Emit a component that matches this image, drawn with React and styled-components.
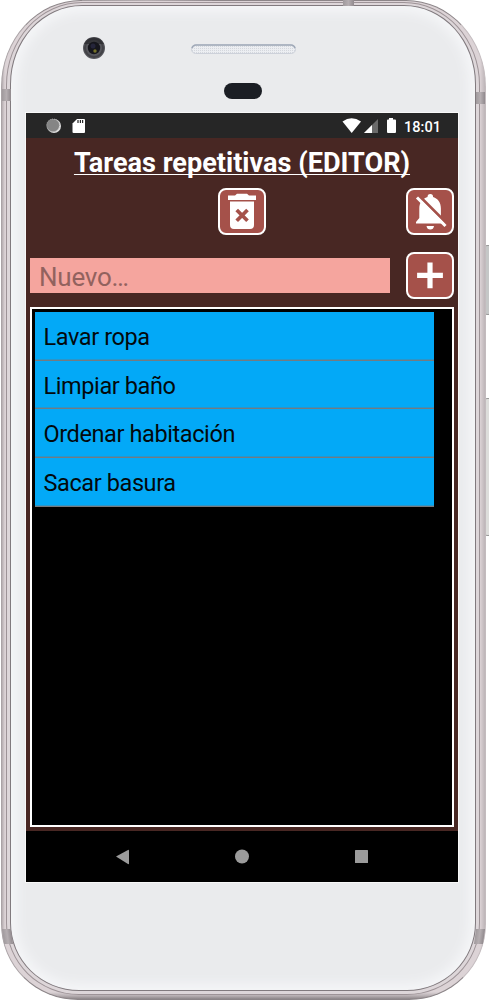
import React from 'react';
import styled, { createGlobalStyle } from 'styled-components';

const Global = createGlobalStyle`
  * { box-sizing: border-box; }
  body { margin: 0; background: #fff; overflow: hidden; font-family: Roboto, sans-serif; }
`;

const Stage = styled.div`
  position: relative;
  width: 489px;
  height: 1000px;
  overflow: hidden;
`;

const SideKey = styled.div`
  position: absolute;
  left: 484px;
  top: ${(p) => p.$top}px;
  width: 9px;
  height: ${(p) => p.$height}px;
  border: 1px solid #9b9b9b;
  border-radius: 3px;
  background: ${(p) => p.$fill};
`;

const Body = styled.div`
  position: relative;
  width: 485px;
  height: 1000px;
  margin-left: 1px;
  padding: 1px 5px 4px 4px;
  border: 1px solid #8c8588;
  border-left-color: #aaa3a6;
  border-right-color: #c3bbbe;
  border-radius: 80px 80px 77px 77px / 87px 87px 76px 76px;
  background:
    linear-gradient(0deg, #8d8689 0, #b5adb0 3px, transparent 7px),
    linear-gradient(90deg, #b5adb0 0, #dcd3d6 3px, #dcd3d6 478px, #bdb5b8 100%);
`;

const Rim = styled.div`
  height: 100%;
  padding: 2px 3px 3px;
  border: 1px solid #9d9397;
  border-radius: 76px 76px 73px 73px / 83px 83px 72px 72px;
  background: #ddd6d9;
`;

const Face = styled.div`
  height: 100%;
  padding: 0 15px;
  border: 1px solid #817a7e;
  border-radius: 72px 72px 69px 69px / 79px 79px 68px 68px;
  background: #eaebed;
  box-shadow: inset 0 0 12px 6px #f5f6f8;
  display: flex;
  flex-direction: column;
`;

const Band = styled.i`
  position: absolute;
  left: ${(p) => p.$x}px;
  top: ${(p) => p.$y}px;
  width: ${(p) => p.$w}px;
  height: ${(p) => p.$h}px;
  transform: skewX(${(p) => p.$skew || 0}deg);
  background: linear-gradient(90deg, #a09a9d, #b5aeb1, #918a8e);
`;

const Forehead = styled.svg`
  display: block;
  flex: none;
  width: 432px;
  height: 107px;
`;

const Screen = styled.main`
  width: 432px;
  height: 769px;
  flex: none;
  display: flex;
  flex-direction: column;
  background: #000;
  box-shadow: 0 0 0 1px #f8f8f8;
`;

const StatusBar = styled.header`
  height: 25px;
  flex: none;
  display: flex;
  background: #262626;
`;

const StatusIcons = styled.svg`
  width: 432px;
  height: 25px;
  text { font: 500 15px Roboto, sans-serif; fill: #fff; }
`;

const Editor = styled.section`
  height: 693px;
  flex: none;
  padding: 0 4px 4px;
  display: flex;
  flex-direction: column;
  background: #482723;
`;

const Title = styled.h1`
  height: 50px;
  margin: 0;
  padding-top: 9px;
  font-size: 27.1px;
  line-height: 33px;
  font-weight: 700;
  text-align: center;
  white-space: nowrap;
  color: #fff;
  text-decoration: underline;
  text-decoration-thickness: 1px;
  text-decoration-skip-ink: none;
  text-underline-offset: 2px;
`;

const ActionRow = styled.div`
  display: grid;
  grid-template-columns: 1fr 48px 1fr;
  height: 64px;
`;

const IconButton = styled.button`
  width: 48px;
  height: 47px;
  padding: 0;
  border: 2px solid #fff;
  border-radius: 8px;
  background: #a5514a;
  justify-self: end;
  svg { display: block; width: 44px; height: 43px; }
`;

const InputRow = styled.div`
  display: flex;
  justify-content: space-between;
  align-items: center;
  height: 47px;
`;

const Field = styled.input`
  width: 360px;
  height: 35px;
  padding: 2px 9px 0;
  border: 0;
  border-radius: 0;
  background: #f5a59e;
  font: 400 26px Roboto, sans-serif;
  letter-spacing: -0.25px;
  &::placeholder { color: #92625e; opacity: 1; }
`;

const List = styled.ul`
  flex: 1;
  margin: 8px 0 0;
  padding: 3px;
  list-style: none;
  border: 2px solid #fff;
  background: #000;
  display: grid;
  grid-template-rows: 49px 48px 49px 49px;
`;

const Task = styled.li`
  width: 399px;
  padding-left: 8.5px;
  border-bottom: 1px solid #757b80;
  box-shadow: inset 0 -1px 0 #2c95c8;
  background: #03a9f7;
  color: #03090c;
  font-size: 23.5px;
  letter-spacing: -0.4px;
  line-height: 51px;
`;

const NavBar = styled.nav`
  flex: 1;
  svg { display: block; width: 432px; height: 51px; fill: #9b9b9b; }
`;

const tasks = ['Lavar ropa', 'Limpiar baño', 'Ordenar habitación', 'Sacar basura'];

export default function App() {
  return (
    <>
      <Global />
      <Stage>
        <SideKey $top={245} $height={70} $fill="#c5c7c7" />
        <SideKey $top={398} $height={138} $fill="#dddddb" />
        <Body>
          <Band $x={80} $y={-1} $w={130} $h={1} />
          <Band $x={341} $y={-1} $w={11} $h={6} />
          <Band $x={0} $y={88} $w={9} $h={12} />
          <Band $x={474} $y={91} $w={9} $h={12} />
          <Band $x={1} $y={928} $w={9} $h={15} $skew={8} />
          <Band $x={473} $y={928} $w={9} $h={15} $skew={-8} />
          <Rim>
            <Face>
              <Forehead viewBox="26 6 432 107">
                <defs>
                  <pattern id="mesh" width="2" height="2" patternUnits="userSpaceOnUse">
                    <rect width="2" height="2" fill="#eceef2" />
                    <rect width="1" height="1" fill="#d4d7dd" />
                  </pattern>
                </defs>
                <circle cx="94" cy="48" r="11" fill="#57575d" />
                <circle cx="94" cy="48" r="9" fill="none" stroke="#424247" strokeWidth="2" />
                <path d="M84 44a11 11 0 0 1 20 0z" fill="#29292e" opacity=".7" />
                <circle cx="94" cy="48" r="6.2" fill="#16161d" />
                <circle cx="93" cy="46" r="2.5" fill="#25253a" />
                <circle cx="95" cy="51" r="1.7" fill="#737027" />
                <rect x="191.5" y="45" width="104" height="8.5" rx="4.2" fill="url(#mesh)" stroke="#cdd1da" />
                <path d="M192 48q1-3 4-3h95q3 0 4 3" fill="none" stroke="#a0a9b8" strokeWidth="1.6" />
                <rect x="224" y="83" width="38" height="16" rx="8" fill="#1b1e24" />
              </Forehead>
              <Screen>
                <StatusBar>
                  <StatusIcons viewBox="26 113 432 25">
                    <circle cx="54" cy="126" r="7" fill="#dedede" />
                    <circle cx="53" cy="125.3" r="6.3" fill="#858585" stroke="#aaa" strokeDasharray="1 1" />
                    <path d="M77 119h7q1 0 1 1v12q0 1-1 1H73.500q-1 0-1-1v-8.500z" fill="#fff" />
                    <path d="M78 120v3M80.400 120v3M82.600 120v3" stroke="#262626" strokeWidth="1.2" />
                    <path d="M342.500 121.500Q351.500 115 361 121.500L351.700 133z" fill="#fff" />
                    <path d="M378 119v14h-14z" fill="#6b6b6b" />
                    <path d="M372 125v8h-8z" fill="#fff" />
                    <path d="M389 118h4v1.500h2q1 0 1 1V132q0 1-1 1h-7q-1 0-1-1v-11.500q0-1 1-1h1z" fill="#fff" />
                    <text x="404" y="132" textLength="37" lengthAdjust="spacingAndGlyphs">18:01</text>
                  </StatusIcons>
                </StatusBar>
                <Editor>
                  <Title>Tareas repetitivas (EDITOR)</Title>
                  <ActionRow>
                    <span />
                    <IconButton aria-label="Borrar">
                      <svg viewBox="220 190 44 43">
                        <path d="M228 195.500h7l2-1.700h10l2 1.700h7v4.500h-28zM230 201.500h24v23.500q0 4-4 4h-16q-4 0-4-4z" fill="#fff" />
                        <path d="m236.700 210 10.800 10.800m0-10.800L236.700 220.800" stroke="#a5514a" strokeWidth="3.7" />
                      </svg>
                    </IconButton>
                    <IconButton aria-label="Silenciar">
                      <svg viewBox="408 190 44 43">
                        <path d="M427.500 197q0-3 2.800-3t2.800 3c5 1.500 7.800 6 7.800 11.500v8l5.500 7H416v-1.500l3.300-4v-9.500c0-5.500 3-10 8.200-11.500zM426.500 226h7.500q-.5 3.500-3.700 3.500T426.500 226z" fill="#fff" />
                        <path d="m418.800 195.500 29 29" stroke="#a5514a" strokeWidth="3" />
                        <path d="m417 197.500 28.500 28.500" stroke="#fff" strokeWidth="3" />
                      </svg>
                    </IconButton>
                  </ActionRow>
                  <InputRow>
                    <Field placeholder="Nuevo…" />
                    <IconButton aria-label="Agregar">
                      <svg viewBox="408 254 44 43">
                        <path d="M430 265v20.600M419.700 275.300h20.600" fill="none" stroke="#fff" strokeWidth="5.2" strokeLinecap="square" />
                      </svg>
                    </IconButton>
                  </InputRow>
                  <List>
                    {tasks.map((task) => <Task key={task}>{task}</Task>)}
                  </List>
                </Editor>
                <NavBar>
                  <svg viewBox="26 831 432 51">
                    <path d="M116 856.500 128 850q1-.5 1 .5v13q0 1-1 .5z" />
                    <circle cx="242" cy="856.5" r="7" />
                    <rect x="355" y="850" width="13" height="13" rx=".5" />
                  </svg>
                </NavBar>
              </Screen>
            </Face>
          </Rim>
        </Body>
      </Stage>
    </>
  );
}
